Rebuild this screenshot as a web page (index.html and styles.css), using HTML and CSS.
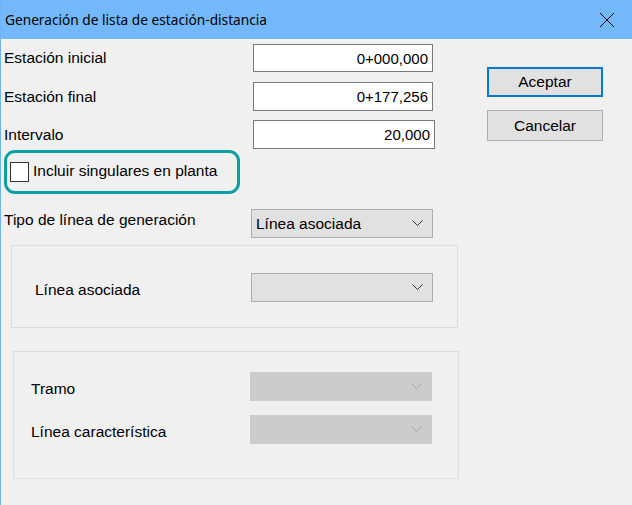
FILE: index.html
```html
<!DOCTYPE html>
<html lang="es">
<head>
    <meta charset="UTF-8">
    <meta name="viewport" content="width=device-width, initial-scale=1.0">
    <title>Generación de lista de estación-distancia</title>
    <link rel="stylesheet" href="styles.css">
</head>
<body>
    <div class="window">
        <div class="titlebar">
            <span class="title">Generación de lista de estación-distancia</span>
            <svg class="close" width="16" height="16" viewBox="0 0 16 16">
                <path d="M1 1 L15 15 M15 1 L1 15" stroke="#000" stroke-width="1" fill="none"/>
            </svg>
        </div>

        <div class="content">
            <div class="form">
                <div class="row row-first">
                    <span class="label">Estación inicial</span>
                    <div class="textbox">0+000,000</div>
                </div>
                <div class="row row-second">
                    <span class="label">Estación final</span>
                    <div class="textbox">0+177,256</div>
                </div>
                <div class="row row-third">
                    <span class="label">Intervalo</span>
                    <div class="textbox wide">20,000</div>
                </div>

                <div class="highlight">
                    <span class="checkbox"></span>
                    <span class="check-label">Incluir singulares en planta</span>
                </div>

                <div class="row row-tipo">
                    <span class="label">Tipo de línea de generación</span>
                    <div class="combo">
                        <span>Línea asociada</span>
                        <svg class="chevron" width="11" height="7" viewBox="0 0 11 7">
                            <path d="M0.5 0.5 L5.5 5.5 L10.5 0.5" stroke="#333" fill="none"/>
                        </svg>
                    </div>
                </div>

                <div class="group group-one">
                    <div class="row">
                        <span class="label">Línea asociada</span>
                        <div class="combo">
                            <span></span>
                            <svg class="chevron" width="11" height="7" viewBox="0 0 11 7">
                                <path d="M0.5 0.5 L5.5 5.5 L10.5 0.5" stroke="#333" fill="none"/>
                            </svg>
                        </div>
                    </div>
                </div>

                <div class="group group-two">
                    <div class="row">
                        <span class="label">Tramo</span>
                        <div class="combo disabled">
                            <span></span>
                            <svg class="chevron" width="11" height="7" viewBox="0 0 11 7">
                                <path d="M0.5 0.5 L5.5 5.5 L10.5 0.5" stroke="#a6a6a6" fill="none"/>
                            </svg>
                        </div>
                    </div>
                    <div class="row row-caract">
                        <span class="label">Línea característica</span>
                        <div class="combo disabled">
                            <span></span>
                            <svg class="chevron" width="11" height="7" viewBox="0 0 11 7">
                                <path d="M0.5 0.5 L5.5 5.5 L10.5 0.5" stroke="#a6a6a6" fill="none"/>
                            </svg>
                        </div>
                    </div>
                </div>
            </div>

            <div class="buttons">
                <button class="btn btn-default">Aceptar</button>
                <button class="btn">Cancelar</button>
            </div>
        </div>
    </div>
</body>
</html>
```

FILE: styles.css
```css
body {
    margin: 0;
    background-color: #f0f0f0;
    font-family: "Liberation Sans", Arial, sans-serif;
    color: #000;
}

.window {
    width: 631px;
    height: 505px;
    border-left: 1px solid #6fb3f5;
    background-color: #f0f0f0;
}

.titlebar {
    height: 39px;
    background-color: #74b8fc;
    display: flex;
    align-items: center;
    padding: 0 17px 0 4px;
}

.title {
    font-family: "Noto Sans", sans-serif;
    font-size: 13.7px;
    flex: 1;
    padding-bottom: 1px;
}

.close {
    display: block;
}

.content {
    display: flex;
}

.form {
    width: 457px;
    display: flex;
    flex-direction: column;
}

.row {
    display: grid;
    grid-template-columns: 249px 182px;
    align-items: center;
    padding-left: 3px;
    font-size: 15.5px;
}

.row-first {
    margin-top: 5px;
}

.row-second {
    margin-top: 10px;
}

.row-third {
    margin-top: 9px;
}

.textbox {
    box-sizing: border-box;
    width: 180px;
    height: 28px;
    border: 1px solid #7a7a7a;
    background-color: #fff;
    text-align: right;
    padding: 5px 4px 0 0;
    font-size: 15px;
}

.row-second .textbox {
    height: 29px;
}

.textbox.wide {
    width: 182px;
    height: 29px;
}

.highlight {
    margin: 1px 0 0 3px;
    width: 227px;
    height: 38px;
    border: 3px solid #0b9fa6;
    border-radius: 11px;
    display: flex;
    align-items: center;
    gap: 4px;
    padding-left: 3px;
    font-size: 15.5px;
}

.checkbox {
    width: 17px;
    height: 18px;
    border: 1px solid #333;
    background-color: #fff;
}

.check-label {
    padding-bottom: 2px;
}

.row-tipo {
    margin-top: 15px;
}

.row-tipo .label {
    margin-top: -8px;
}

.combo {
    box-sizing: border-box;
    width: 182px;
    height: 29px;
    margin-left: -2px;
    border: 1px solid #adadad;
    background-color: #e1e1e1;
    display: flex;
    align-items: center;
    justify-content: space-between;
    padding: 0 9px 0 4px;
    font-size: 15.5px;
}

.combo.disabled {
    background-color: #cccccc;
    border-color: #cccccc;
}

.chevron {
    display: block;
}

.group {
    box-sizing: border-box;
    border: 1px solid #dcdcdc;
    margin-left: 10px;
    width: 447px;
}

.group .row {
    padding-left: 0;
}

.group .label {
    padding-top: 5px;
}

.group-one {
    margin-top: 7px;
    height: 83px;
    padding: 27px 0 0 23px;
}

.group-one .row {
    grid-template-columns: 218px 182px;
}

.group-two {
    margin-top: 23px;
    margin-left: 12px;
    width: 446px;
    height: 128px;
    padding: 20px 0 0 17px;
}

.group-two .row {
    grid-template-columns: 221px 182px;
}

.row-caract {
    margin-top: 14px;
}

.buttons {
    display: flex;
    flex-direction: column;
    gap: 13px;
    margin: 28px 0 0 29px;
}

.btn {
    width: 116px;
    height: 31px;
    background-color: #e1e1e1;
    border: 1px solid #adadad;
    font-family: "Liberation Sans", Arial, sans-serif;
    font-size: 15.5px;
    color: #000;
    padding: 0;
}

.btn-default {
    height: 30px;
    border: 2px solid #0078d7;
}
```
